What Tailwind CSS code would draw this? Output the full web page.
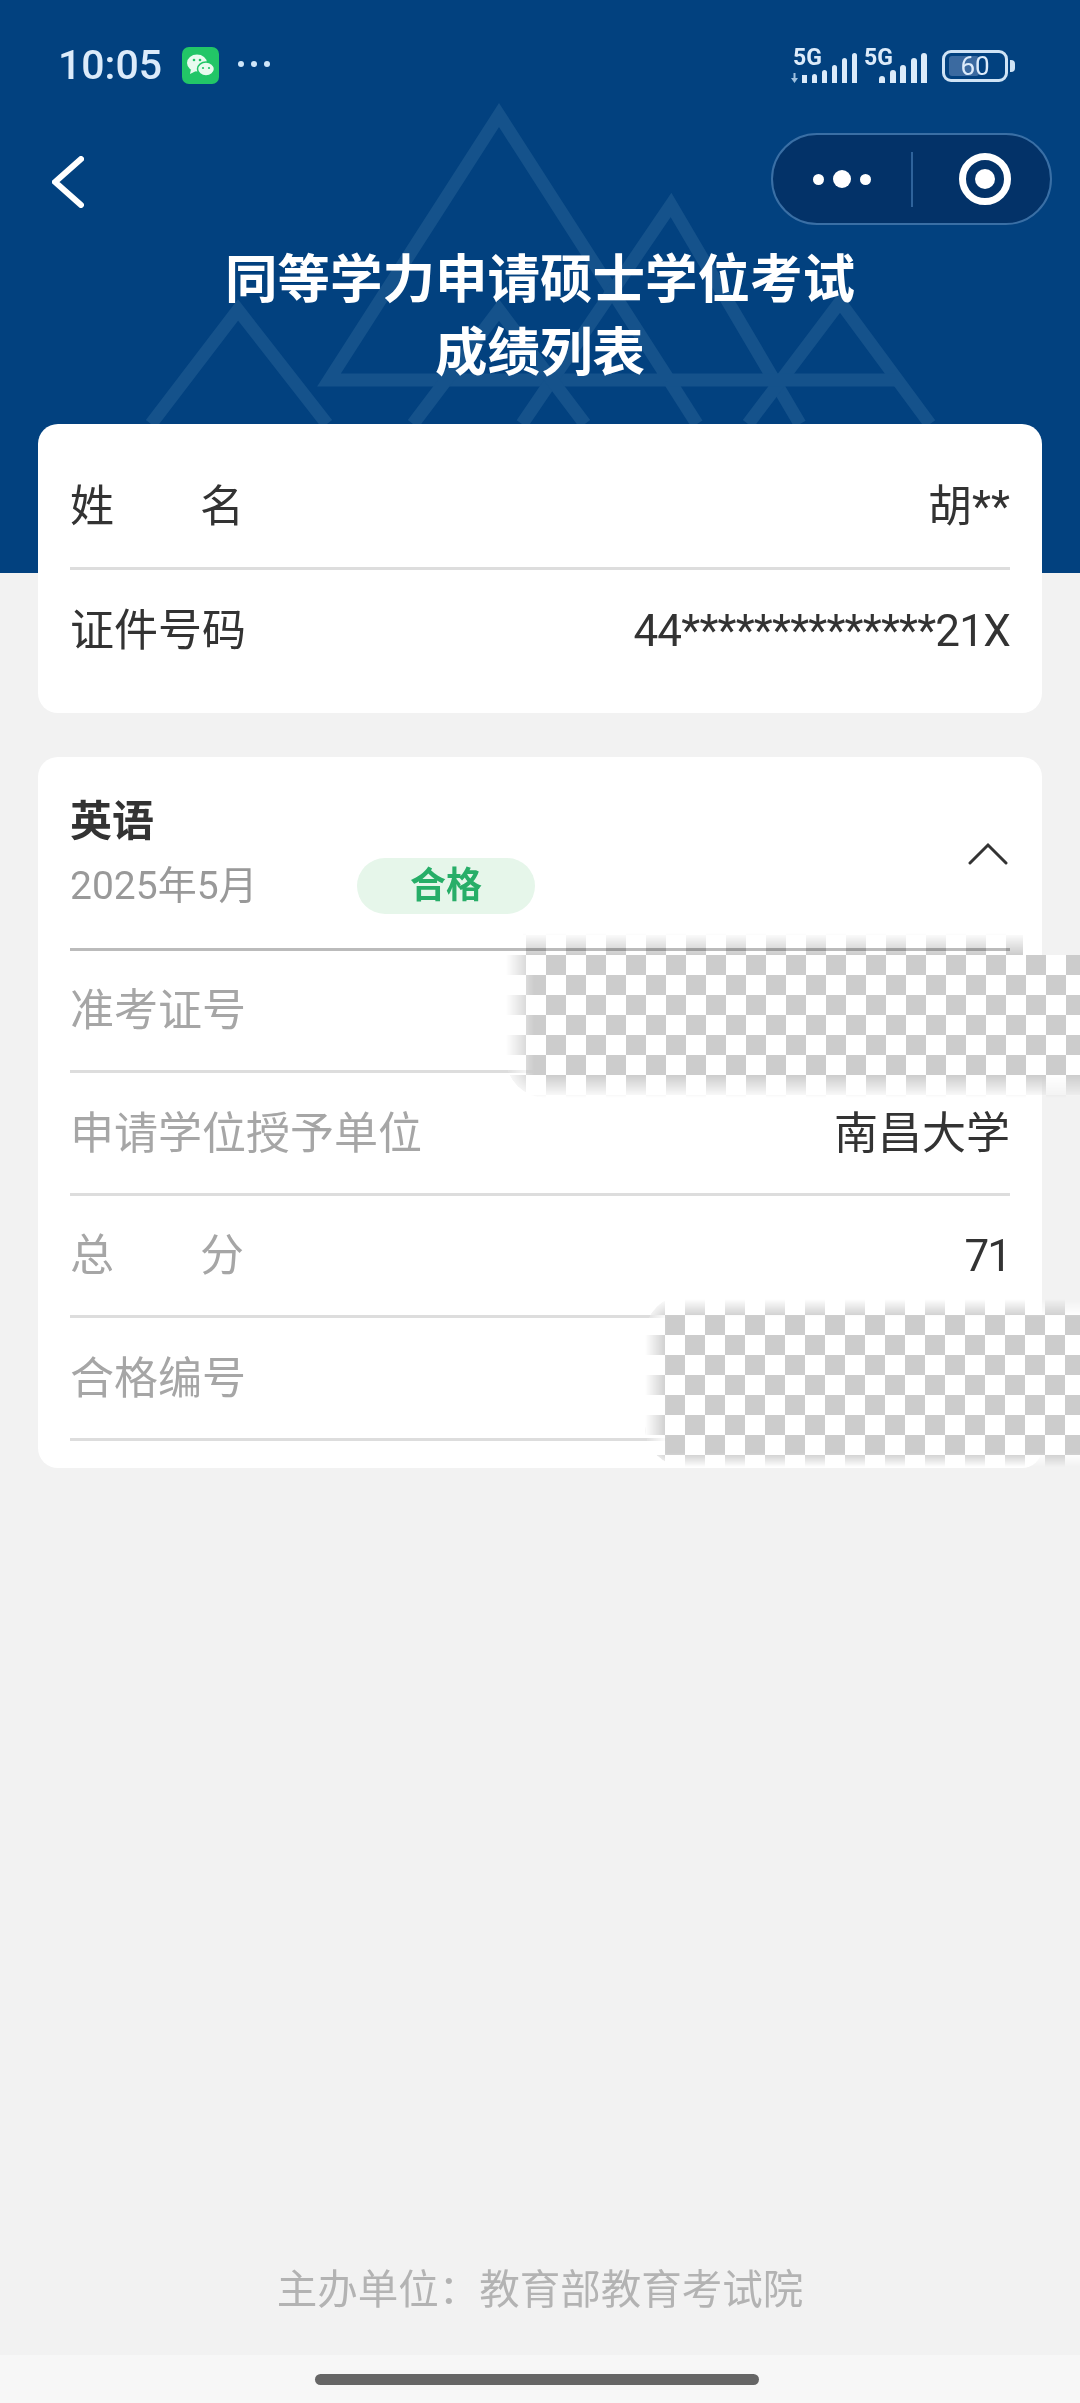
<!DOCTYPE html>
<html lang="zh-CN">
<head>
    <meta charset="UTF-8">
    <meta name="viewport" content="width=device-width, initial-scale=1.0">
    <title>成绩列表</title>
    <script src="https://cdn.jsdelivr.net/npm/@tailwindcss/browser@4"></script>
</head>
<body class="bg-[#f2f2f2] font-['Roboto','Noto_Sans_CJK_SC',sans-serif]">
    <div class="relative flex flex-col w-[1080px] h-[2403px] overflow-hidden">

        <!-- header -->
        <header class="relative h-[573px] shrink-0 bg-[#02417f] overflow-hidden">
            <svg class="absolute inset-0" width="1080" height="573" fill="none" stroke="#15528b" stroke-width="13">
                <path d="M329 380 L499 115 L669 380 Z" />
                <path d="M669 380 L697 424" />
                <path d="M522 424 L671 205 L800 424" />
                <path d="M748 424 L840 302 L930 424" />
                <path d="M669 380 H895" />
                <path d="M151 424 L238 310 L327 424" />
                <path d="M413 424 L499 310 L585 424" />
            </svg>

            <div class="relative flex flex-col">
                <!-- status bar -->
                <div class="flex items-center justify-between h-[37px] mt-[47px] pl-[58px] pr-[65px]">
                    <div class="flex items-center">
                        <span class="w-[124px] text-[41px] leading-none font-medium text-[#dcebfa]">10:05</span>
                        <svg width="37" height="37" viewBox="0 0 37 37">
                            <rect width="37" height="37" rx="7" fill="#22c667" />
                            <ellipse cx="15" cy="16" rx="10" ry="8.5" fill="#e9fbef" />
                            <path d="M9 22 L8 27 L14 24 Z" fill="#e9fbef" />
                            <ellipse cx="24" cy="22" rx="8.5" ry="7" fill="#e9fbef" stroke="#22c667" stroke-width="1.5" />
                            <circle cx="12" cy="13" r="1.3" fill="#22c667" />
                            <circle cx="18" cy="13" r="1.3" fill="#22c667" />
                            <circle cx="21" cy="21" r="1.1" fill="#22c667" />
                            <circle cx="27" cy="21" r="1.1" fill="#22c667" />
                        </svg>
                        <div class="flex gap-[7px] ml-[19px] -mt-[4px]">
                            <span class="w-[6px] h-[6px] rounded-full bg-[#cfe6fa]"></span>
                            <span class="w-[6px] h-[6px] rounded-full bg-[#cfe6fa]"></span>
                            <span class="w-[6px] h-[6px] rounded-full bg-[#cfe6fa]"></span>
                        </div>
                    </div>
                    <div class="flex items-center">
                        <div class="relative flex items-end justify-end gap-[5px] h-[34px] w-[66px]">
                            <span class="absolute left-[2px] top-0 text-[23px] leading-[17px] font-bold text-[#dcebfa]">5G</span>
                            <svg class="absolute left-0 bottom-0" width="7" height="10" viewBox="0 0 7 10" fill="#9fc0df">
                                <path d="M2.5 0 H4.5 V5 H7 L3.5 10 L0 5 H2.5 Z" />
                            </svg>
                            <span class="w-[5px] h-[8px] bg-[#dcebfa]"></span>
                            <span class="w-[5px] h-[9px] rounded-t-sm bg-[#dcebfa]"></span>
                            <span class="w-[5px] h-[13px] rounded-t-sm bg-[#dcebfa]"></span>
                            <span class="w-[5px] h-[18px] rounded-t-sm bg-[#dcebfa]"></span>
                            <span class="w-[5px] h-[25px] rounded-t-sm bg-[#dcebfa]"></span>
                            <span class="w-[5px] h-[30px] rounded-t-sm bg-[#dcebfa]"></span>
                        </div>
                        <div class="relative flex items-end justify-end gap-[4.5px] h-[34px] w-[63px] ml-[7px]">
                            <span class="absolute left-0 top-0 text-[23px] leading-[17px] font-bold text-[#dcebfa]">5G</span>
                            <span class="w-[6px] h-[7px] rounded-t-sm bg-[#dcebfa]"></span>
                            <span class="w-[6px] h-[13px] rounded-t-sm bg-[#dcebfa]"></span>
                            <span class="w-[6px] h-[18px] rounded-t-sm bg-[#dcebfa]"></span>
                            <span class="w-[6px] h-[25px] rounded-t-sm bg-[#dcebfa]"></span>
                            <span class="w-[6px] h-[30px] rounded-t-sm bg-[#dcebfa]"></span>
                        </div>
                        <div class="relative flex items-center justify-center w-[66px] h-[32px] ml-[15px] rounded-[9px] border-[3px] border-[#cfe3f5]">
                            <span class="absolute left-[4px] inset-y-[3px] w-[30px] rounded-[3px] bg-[#3b6aa0]"></span>
                            <span class="relative text-[26px] leading-none text-[#dcebfa]">60</span>
                        </div>
                        <span class="w-[5px] h-[12px] ml-[2px] rounded-r-sm bg-[#cfe3f5]"></span>
                    </div>
                </div>

                <!-- nav -->
                <div class="flex items-center justify-between h-[92px] mt-[49px] pl-[52px] pr-[28px]">
                    <svg class="mt-[6px]" width="32" height="52" viewBox="0 0 32 52" fill="none" stroke="#ffffff" stroke-width="6" stroke-linecap="round">
                        <path d="M29 3 L3 26 L29 49" />
                    </svg>
                    <div class="flex items-center w-[281px] h-[92px] rounded-full border-2 border-[#3a6fa5] bg-[#033268]">
                        <div class="flex items-center justify-center gap-[9px] w-[138px]">
                            <span class="w-[11px] h-[11px] rounded-full bg-white"></span>
                            <span class="w-[18px] h-[18px] rounded-full bg-white"></span>
                            <span class="w-[11px] h-[11px] rounded-full bg-white"></span>
                        </div>
                        <span class="w-[2px] h-[55px] bg-[#2f639b]"></span>
                        <div class="flex items-center justify-center flex-1 pl-[6px]">
                            <span class="flex items-center justify-center w-[52px] h-[52px] rounded-full border-[7px] border-white">
                                <span class="w-[20px] h-[20px] rounded-full bg-white"></span>
                            </span>
                        </div>
                    </div>
                </div>

                <h1 class="mt-[19px] text-center text-[52.5px] leading-[73px] font-bold text-white">
                    同等学力申请硕士学位考试<br>成绩列表
                </h1>
            </div>
        </header>

        <main class="relative flex flex-col gap-[44px] -mt-[149px] px-[38px]">
            <!-- person card -->
            <section class="flex flex-col h-[289px] px-[32px] pt-[20px] rounded-[20px] bg-white text-[44px] text-[#333333]">
                <div class="flex items-center justify-between h-[126px] pt-[2px] border-b-[3px] border-[#dddddd]">
                    <span class="flex justify-between w-[174px]"><span>姓</span><span>名</span></span>
                    <span>胡**</span>
                </div>
                <div class="flex items-center justify-between h-[120px] pt-[2px]">
                    <span>证件号码</span>
                    <span class="tracking-[-0.8px]">44**************21X</span>
                </div>
            </section>

            <!-- score card -->
            <section class="flex flex-col h-[711px] px-[32px] rounded-[20px] bg-white text-[44px] text-[#a6a6a6]">
                <div class="flex items-center justify-between h-[193.5px] shrink-0 border-b-[3px] border-[#bbbbbb]">
                    <div class="mt-[8.5px]">
                        <div class="text-[42px] leading-[46px] font-bold text-[#333333]">英语</div>
                        <div class="flex items-center mt-[13px]">
                            <span class="w-[288px] text-[39px] leading-[46px] text-[#999999]">2025年5月</span>
                            <span class="flex items-center justify-center w-[178px] h-[56px] -ml-[1px] rounded-full bg-[#e6f6ea] text-[36px] font-bold text-[#27ae68]">合格</span>
                        </div>
                    </div>
                    <svg width="40" height="24" viewBox="0 0 40 24" fill="none" stroke="#333333" stroke-width="3" stroke-linecap="round" class="mr-[2px] mt-[4px]">
                        <path d="M2 21 L20 3 L38 21" />
                    </svg>
                </div>
                <div class="flex items-center h-[122.5px] pt-[2px] shrink-0 border-b-[3px] border-[#dddddd]">
                    <span>准考证号</span>
                </div>
                <div class="flex items-center justify-between h-[122.5px] pt-[2px] shrink-0 border-b-[3px] border-[#dddddd]">
                    <span>申请学位授予单位</span>
                    <span class="text-[#333333]">南昌大学</span>
                </div>
                <div class="flex items-center justify-between h-[122.5px] pt-[2px] shrink-0 border-b-[3px] border-[#dddddd]">
                    <span class="flex justify-between w-[174px]"><span>总</span><span>分</span></span>
                    <span class="tracking-[-2px] text-[#333333]">71</span>
                </div>
                <div class="flex items-center h-[122.5px] pt-[2px] shrink-0 border-b-[3px] border-[#dddddd]">
                    <span>合格编号</span>
                </div>
            </section>
        </main>

        <footer class="flex flex-col mt-auto">
            <p class="text-center text-[40.5px] leading-[48px] text-[#b3b3b3] mb-[41px]">主办单位：教育部教育考试院</p>
            <div class="flex justify-center h-[48px] pt-[19px] pr-[6px] bg-[#f7f7f7]">
                <span class="w-[444px] h-[11px] rounded-full bg-[#666666]"></span>
            </div>
        </footer>

        <!-- redaction patches over the card -->
        <div class="absolute left-[523px] top-[933px] w-[500px] h-[22px] mix-blend-multiply bg-[repeating-conic-gradient(#ffffff_0_25%,#cccccc_0_50%)] [background-size:40px_40px] [background-position:-17px_-18px] [mask-image:linear-gradient(to_bottom,transparent,black)]"></div>
        <div class="absolute left-[506px] top-[955px] w-[574px] h-[143px] rounded-bl-[40px] blur-[0.5px] bg-[repeating-conic-gradient(#ffffff_0_25%,#cccccc_0_50%)] [background-size:40px_40px] [mask-image:linear-gradient(to_right,transparent,black_28px),linear-gradient(to_bottom,black_120px,transparent)] [mask-composite:intersect]"></div>
        <div class="absolute left-[645px] top-[1295px] w-[435px] h-[172px] rounded-l-[40px] blur-[0.5px] bg-[repeating-conic-gradient(#ffffff_0_25%,#cccccc_0_50%)] [background-size:40px_40px] [mask-image:linear-gradient(to_right,transparent,black_22px),linear-gradient(to_bottom,transparent_4px,black_22px,black_158px,transparent)] [mask-composite:intersect]"></div>
    </div>
</body>
</html>
